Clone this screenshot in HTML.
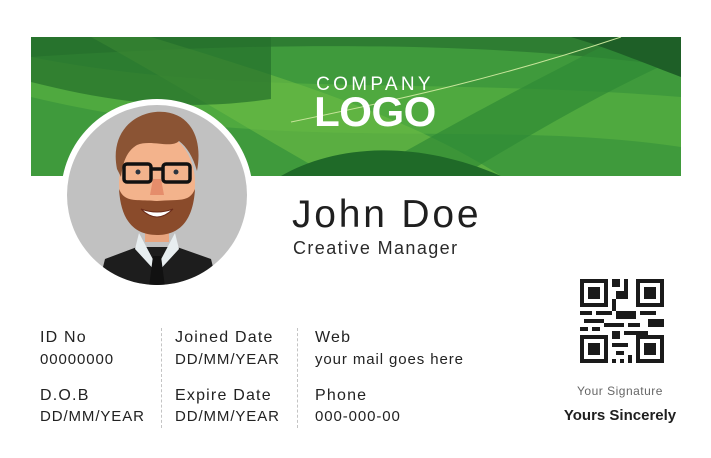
<!DOCTYPE html>
<html><head><meta charset="utf-8"><style>
html,body{margin:0;padding:0;background:#fff;}
body{width:711px;height:458px;position:relative;overflow:hidden;font-family:"Liberation Sans",sans-serif;color:#222;}
.abs{position:absolute;}
.lab{font-size:16px;color:#222;letter-spacing:1.2px;}
.val{font-size:15px;color:#222;letter-spacing:0.9px;}
.dash{position:absolute;width:0;border-left:1px dashed #c4c4c4;}
</style></head><body>
<svg class="abs" style="left:31px;top:37px" width="650" height="139" viewBox="0 0 650 139">
<rect width="650" height="139" fill="#3f9a3c"/>
<path d="M0 0 L650 0 L650 30 C500 10 300 0 0 20Z" fill="#2e7d32"/>
<path d="M0 20 C200 60 400 40 650 60 L650 110 C450 80 250 120 0 60Z" fill="#4fa93f"/>
<path d="M120 0 C250 40 380 80 470 139 L300 139 C230 100 150 50 60 0Z" fill="#6cbd45" opacity="0.6"/>
<path d="M0 45 C80 65 150 75 240 62 L240 0 L0 0Z" fill="#256f2b" opacity="0.7"/>
<path d="M330 139 C400 100 470 60 590 0 L650 0 L650 20 C560 60 480 110 430 139Z" fill="#2f8a34" opacity="0.7"/>
<path d="M250 139 C300 110 380 100 470 139Z" fill="#1f6a28"/>
<path d="M540 0 L650 0 L650 40 C610 25 580 12 540 0Z" fill="#1e5f27"/>
<path d="M260 85 C380 60 470 40 590 0" stroke="#c7e59a" stroke-width="1" fill="none"/>
</svg>
<div class="abs" style="left:280px;top:74px;width:190px;text-align:center;color:#fff;font-size:19px;letter-spacing:3.3px;">COMPANY</div>
<div class="abs" style="left:280px;top:88px;width:190px;text-align:center;color:#fff;font-size:42px;font-weight:bold;letter-spacing:-0.5px;">LOGO</div>
<svg class="abs" style="left:61px;top:99px" width="192" height="192" viewBox="0 0 192 192">
<defs><clipPath id="c"><circle cx="96" cy="96" r="90"/></clipPath></defs>
<circle cx="96" cy="96" r="96" fill="#fff"/>
<circle cx="96" cy="96" r="90" fill="#c1c1c1"/>
<g clip-path="url(#c)">
<path d="M36 192 L44 160 L76 148 L116 148 L150 160 L158 192Z" fill="#1d1d1d"/>
<path d="M78 134 L96 168 L114 134 L118 150 L96 174 L74 150Z" fill="#e8eef0"/>
<path d="M92 157 L100 157 L104 188 L96 192 L88 188Z" fill="#111"/>
<rect x="84" y="118" width="24" height="25" fill="#e8a57f"/>
<ellipse cx="96" cy="84" rx="38" ry="50" fill="#f3b38c"/>
<path d="M58 90 C60 125 76 136 96 136 C116 136 132 125 134 90 C128 104 118 100 96 102 C74 100 64 104 58 90Z" fill="#8a4b2b"/>
<path d="M80 110 Q96 126 112 110 Q96 116 80 110Z" fill="#fff" stroke="#6b2c1a"/>
<path d="M56 70 C48 30 78 10 104 13 C130 16 142 40 136 72 C132 58 126 48 118 42 C110 50 90 40 76 46 C66 52 62 62 60 78Z" fill="#8b5434"/>
<rect x="63" y="65" width="27" height="18" rx="3" fill="none" stroke="#111" stroke-width="3.5"/>
<rect x="102" y="65" width="27" height="18" rx="3" fill="none" stroke="#111" stroke-width="3.5"/>
<path d="M90 70 L102 70" stroke="#111" stroke-width="3.5"/>
<circle cx="77" cy="73" r="2.5" fill="#2a3440"/><circle cx="115" cy="73" r="2.5" fill="#2a3440"/>
<path d="M92 80 L100 80 L103 96 L89 96Z" fill="#e58d6b"/>
</g>
</svg>
<div class="abs" style="left:292px;top:193px;font-size:39px;color:#1f1f1f;letter-spacing:2.8px;">John Doe</div>
<div class="abs" style="left:293px;top:238px;font-size:18px;color:#2a2a2a;letter-spacing:1.4px;">Creative Manager</div>
<div class="abs lab" style="left:40px;top:329px">ID No</div>
<div class="abs val" style="left:40px;top:351px">00000000</div>
<div class="abs lab" style="left:40px;top:387px">D.O.B</div>
<div class="abs val" style="left:40px;top:408px">DD/MM/YEAR</div>
<div class="dash" style="left:161px;top:328px;height:100px"></div>
<div class="abs lab" style="left:175px;top:329px">Joined Date</div>
<div class="abs val" style="left:175px;top:351px">DD/MM/YEAR</div>
<div class="abs lab" style="left:175px;top:387px">Expire Date</div>
<div class="abs val" style="left:175px;top:408px">DD/MM/YEAR</div>
<div class="dash" style="left:297px;top:328px;height:100px"></div>
<div class="abs lab" style="left:315px;top:329px">Web</div>
<div class="abs val" style="left:315px;top:351px">your mail goes here</div>
<div class="abs lab" style="left:315px;top:387px">Phone</div>
<div class="abs val" style="left:315px;top:408px">000-000-00</div>
<svg class="abs" style="left:580px;top:279px" width="84" height="84" viewBox="0 0 21 21" shape-rendering="crispEdges">
<g fill="#1a1a1a">
<rect x="0" y="0" width="7" height="7"/><rect x="1" y="1" width="5" height="5" fill="#fff"/><rect x="2" y="2" width="3" height="3"/>
<rect x="14" y="0" width="7" height="7"/><rect x="15" y="1" width="5" height="5" fill="#fff"/><rect x="16" y="2" width="3" height="3"/>
<rect x="0" y="14" width="7" height="7"/><rect x="1" y="15" width="5" height="5" fill="#fff"/><rect x="2" y="16" width="3" height="3"/>
<rect x="8" y="0" width="2" height="2"/><rect x="11" y="0" width="1" height="3"/><rect x="9" y="3" width="3" height="2"/><rect x="8" y="5" width="1" height="3"/>
<rect x="0" y="8" width="3" height="1"/><rect x="4" y="8" width="4" height="1"/><rect x="1" y="10" width="5" height="1"/><rect x="0" y="12" width="2" height="1"/>
<rect x="9" y="8" width="5" height="2"/><rect x="15" y="8" width="4" height="1"/><rect x="17" y="10" width="4" height="2"/><rect x="12" y="11" width="3" height="1"/>
<rect x="6" y="11" width="5" height="1"/><rect x="3" y="12" width="2" height="1"/><rect x="8" y="13" width="2" height="2"/><rect x="11" y="13" width="6" height="1"/>
<rect x="14" y="14" width="7" height="7"/><rect x="15" y="15" width="5" height="5" fill="#fff"/><rect x="16" y="16" width="3" height="3"/>
<rect x="8" y="16" width="4" height="1"/><rect x="9" y="18" width="2" height="1"/><rect x="8" y="20" width="1" height="1"/><rect x="10" y="20" width="1" height="1"/><rect x="12" y="19" width="1" height="2"/>
</g></svg>
<div class="abs" style="left:560px;top:384px;width:120px;text-align:center;font-size:12px;color:#666;letter-spacing:0.5px;">Your Signature</div>
<div class="abs" style="left:556px;top:407px;width:128px;text-align:center;font-size:15px;font-weight:bold;color:#1f1f1f;">Yours Sincerely</div>
</body></html>
